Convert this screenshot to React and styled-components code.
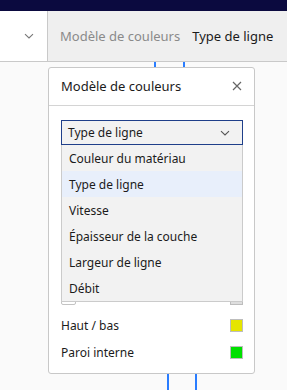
import React from 'react';
import styled, { createGlobalStyle } from 'styled-components';

const Global = createGlobalStyle`
  html, body {
    margin: 0;
    padding: 0;
    background: #fafafa;
    font-family: "Noto Sans", "Open Sans", sans-serif;
    overflow: hidden;
  }
`;

const Page = styled.div`
  width: 287px;
  height: 390px;
  display: flex;
  flex-direction: column;
  background: #fafafa;
  position: relative;
  overflow: hidden;
`;

const TopBar = styled.div`
  height: 11px;
  background: #0b0a3f;
  flex-shrink: 0;
`;

const Toolbar = styled.div`
  height: 50px;
  display: flex;
  border-bottom: 1px solid #c9c9c9;
  flex-shrink: 0;
`;

const ToolLeft = styled.div`
  width: 48px;
  background: #fff;
  border-right: 1px solid #c9c9c9;
  display: flex;
  align-items: center;
  justify-content: center;
  padding-left: 10px;
  box-sizing: border-box;
  color: #777;
`;

const ToolRight = styled.div`
  flex: 1;
  background: #efefef;
  display: flex;
  align-items: center;
  gap: 12px;
  padding-left: 12px;
  white-space: nowrap;
  overflow: hidden;
`;

const Crumb = styled.span`
  font-size: 13px;
  color: ${p => (p.$active ? '#1b1b1b' : '#8a8a8a')};
`;

const Stage = styled.div`
  flex: 1;
  position: relative;
  padding: 5px 0 0 48px;
`;

const Wire = styled.div`
  position: absolute;
  width: 2px;
  background: #2a7dff;
  left: ${p => p.$x}px;
  top: ${p => p.$top}px;
  height: ${p => p.$h}px;
`;

const Panel = styled.div`
  position: relative;
  width: 207px;
  background: #fff;
  border: 1px solid #c8c8c8;
  border-radius: 3px;
  box-sizing: border-box;
`;

const PanelHead = styled.div`
  height: 36px;
  display: flex;
  align-items: center;
  justify-content: space-between;
  padding: 0 12px 1px 12px;
  border-bottom: 1px solid #d4d4d4;
  font-size: 13px;
  color: #1b1b1b;
`;

const Close = styled.span`
  display: flex;
  color: #666;
`;

const PanelBody = styled.div`
  padding: 14px 11px 7px 12px;
`;

const SelectWrap = styled.div`
  position: relative;
`;

const SelectBox = styled.div`
  height: 25px;
  border: 1px solid #1f3f8a;
  background: #f2f2f2;
  display: flex;
  align-items: center;
  justify-content: space-between;
  padding: 0 11px 0 6px;
  font-size: 12px;
  color: #1b1b1b;
  box-sizing: border-box;
`;

const Menu = styled.ul`
  position: absolute;
  z-index: 2;
  top: 100%;
  left: 0;
  right: 0;
  margin: 0;
  padding: 0;
  list-style: none;
  background: #f2f2f2;
  border: 1px solid #cbcbcb;
  border-top: none;
`;

const MenuItem = styled.li`
  height: 26px;
  display: flex;
  align-items: center;
  padding-left: 7px;
  font-size: 12px;
  color: #1b1b1b;
  background: ${p => (p.$selected ? '#e8effb' : 'transparent')};
`;

const Rows = styled.div`
  margin-top: 5px;
  display: flex;
  flex-direction: column;
`;

const Row = styled.div`
  height: 27px;
  display: flex;
  align-items: center;
  justify-content: space-between;
  font-size: 12px;
  color: #1b1b1b;
`;

const Swatch = styled.span`
  width: 11px;
  height: 11px;
  border: 1px solid #bdbdbd;
  background: ${p => p.$color};
`;

const Field = styled.span`
  width: 15px;
  height: 13px;
  border: 1px solid #c3c3c3;
  border-radius: 2px;
  box-sizing: border-box;
`;

const Chevron = ({ size = 12, color = '#666' }) => (
  <svg width={size} height={size} viewBox="0 0 12 12" fill="none">
    <path d="M2 4.2 L6 8 L10 4.2" stroke={color} strokeWidth="1.1" />
  </svg>
);

// rows covered by the open menu show no label
const rows = [
  { color: '#ff7f00' },
  { color: '#ff0000' },
  { color: '#b00000' },
  { color: '#00c0c0' },
  { color: '#d0d0d0' },
  { color: '#dedede', field: true },
  { label: 'Haut / bas', color: '#e5e500' },
  { label: 'Paroi interne', color: '#00e000' },
];

const options = [
  'Couleur du matériau',
  'Type de ligne',
  'Vitesse',
  'Épaisseur de la couche',
  'Largeur de ligne',
  'Débit',
];

export default function App() {
  return (
    <Page>
      <Global />
      <TopBar />
      <Toolbar>
        <ToolLeft>
          <Chevron size={12} color="#777" />
        </ToolLeft>
        <ToolRight>
          <Crumb>Modèle de couleurs</Crumb>
          <Crumb $active>Type de ligne</Crumb>
        </ToolRight>
      </Toolbar>
      <Stage>
        <Wire $x={154} $top={0} $h={5} />
        <Wire $x={183} $top={0} $h={5} />
        <Wire $x={167} $top={311} $h={30} />
        <Wire $x={195} $top={311} $h={30} />
        <Panel>
          <PanelHead>
            <span>Modèle de couleurs</span>
            <Close>
              <svg width="10" height="10" viewBox="0 0 10 10">
                <path d="M1 1 L9 9 M9 1 L1 9" stroke="#666" strokeWidth="1.2" />
              </svg>
            </Close>
          </PanelHead>
          <PanelBody>
            <SelectWrap>
              <SelectBox>
                <span>Type de ligne</span>
                <Chevron size={12} color="#555" />
              </SelectBox>
              <Menu>
                {options.map(o => (
                  <MenuItem key={o} $selected={o === 'Type de ligne'}>
                    {o}
                  </MenuItem>
                ))}
              </Menu>
            </SelectWrap>
            <Rows>
              {rows.map((r, i) => (
                <Row key={i}>
                  {r.field ? <Field /> : <span>{r.label}</span>}
                  <Swatch $color={r.color} />
                </Row>
              ))}
            </Rows>
          </PanelBody>
        </Panel>
      </Stage>
    </Page>
  );
}
